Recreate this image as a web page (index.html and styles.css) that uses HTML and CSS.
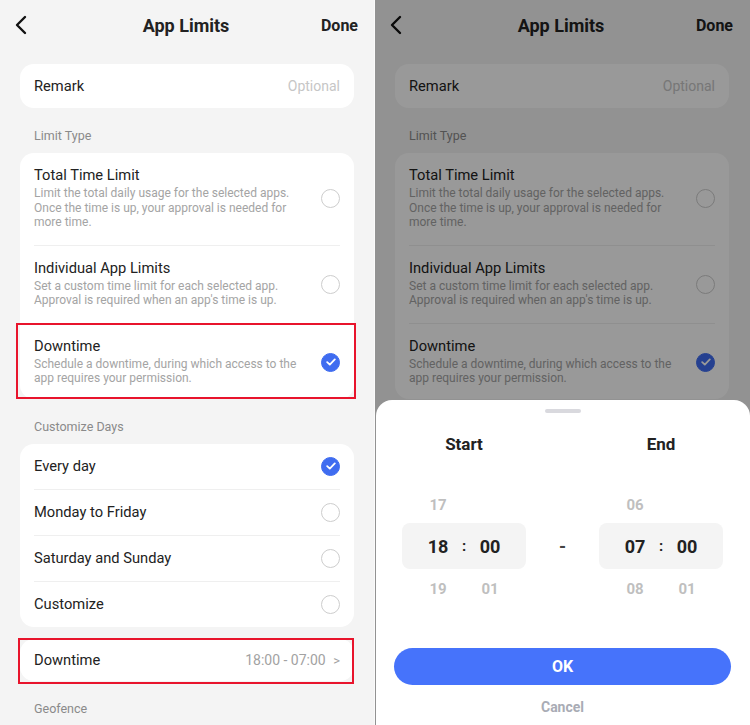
FILE: index.html
```html
<!DOCTYPE html>
<html>
<head>
    <title>App Limits</title>
    <meta charset="UTF-8">
    <link rel="stylesheet" href="styles.css">
</head>
<body>
<div class="screens">

    <!-- settings page -->
    <div class="phone">
        <div class="nav">
            <svg class="back" width="14" height="20" viewBox="0 0 14 20"><path d="M11 2 L3 10 L11 18" fill="none" stroke="#111" stroke-width="2.4" stroke-linecap="round" stroke-linejoin="round"/></svg>
            <div class="nav-title">App Limits</div>
            <div class="nav-done">Done</div>
        </div>

        <div class="card row-card">
            <span class="label">Remark</span>
            <span class="hint">Optional</span>
        </div>

        <div class="section">Limit Type</div>
        <div class="card">
            <div class="item">
                <div class="text">
                    <div class="label">Total Time Limit</div>
                    <div class="desc">Limit the total daily usage for the selected apps. Once the time is up, your approval is needed for more time.</div>
                </div>
                <span class="radio"></span>
            </div>
            <div class="item">
                <div class="text">
                    <div class="label">Individual App Limits</div>
                    <div class="desc">Set a custom time limit for each selected app. Approval is required when an app's time is up.</div>
                </div>
                <span class="radio"></span>
            </div>
            <div class="item marked">
                <div class="text">
                    <div class="label">Downtime</div>
                    <div class="desc">Schedule a downtime, during which access to the app requires your permission.</div>
                </div>
                <span class="radio on"><svg width="10" height="8" viewBox="0 0 10 8"><path d="M1.2 4.2 L3.8 6.6 L8.8 1.4" fill="none" stroke="#fff" stroke-width="1.8" stroke-linecap="round" stroke-linejoin="round"/></svg></span>
            </div>
        </div>

        <div class="section">Customize Days</div>
        <div class="card">
            <div class="day">
                <span class="label">Every day</span>
                <span class="radio on"><svg width="10" height="8" viewBox="0 0 10 8"><path d="M1.2 4.2 L3.8 6.6 L8.8 1.4" fill="none" stroke="#fff" stroke-width="1.8" stroke-linecap="round" stroke-linejoin="round"/></svg></span>
            </div>
            <div class="day">
                <span class="label">Monday to Friday</span>
                <span class="radio"></span>
            </div>
            <div class="day">
                <span class="label">Saturday and Sunday</span>
                <span class="radio"></span>
            </div>
            <div class="day">
                <span class="label">Customize</span>
                <span class="radio"></span>
            </div>
        </div>

        <div class="card row-card downtime boxed">
            <span class="label">Downtime</span>
            <span class="value">18:00 - 07:00 <span class="arrow">&gt;</span></span>
        </div>

        <div class="section">Geofence</div>
    </div>

    <div class="split"></div>

    <!-- same page with the time sheet open -->
    <div class="phone">
        <div class="nav">
            <svg class="back" width="14" height="20" viewBox="0 0 14 20"><path d="M11 2 L3 10 L11 18" fill="none" stroke="#111" stroke-width="2.4" stroke-linecap="round" stroke-linejoin="round"/></svg>
            <div class="nav-title">App Limits</div>
            <div class="nav-done">Done</div>
        </div>

        <div class="card row-card">
            <span class="label">Remark</span>
            <span class="hint">Optional</span>
        </div>

        <div class="section">Limit Type</div>
        <div class="card">
            <div class="item">
                <div class="text">
                    <div class="label">Total Time Limit</div>
                    <div class="desc">Limit the total daily usage for the selected apps. Once the time is up, your approval is needed for more time.</div>
                </div>
                <span class="radio"></span>
            </div>
            <div class="item">
                <div class="text">
                    <div class="label">Individual App Limits</div>
                    <div class="desc">Set a custom time limit for each selected app. Approval is required when an app's time is up.</div>
                </div>
                <span class="radio"></span>
            </div>
            <div class="item">
                <div class="text">
                    <div class="label">Downtime</div>
                    <div class="desc">Schedule a downtime, during which access to the app requires your permission.</div>
                </div>
                <span class="radio on"><svg width="10" height="8" viewBox="0 0 10 8"><path d="M1.2 4.2 L3.8 6.6 L8.8 1.4" fill="none" stroke="#fff" stroke-width="1.8" stroke-linecap="round" stroke-linejoin="round"/></svg></span>
            </div>
        </div>

        <div class="section">Customize Days</div>
        <div class="card">
            <div class="day">
                <span class="label">Every day</span>
                <span class="radio on"></span>
            </div>
        </div>

        <div class="mask"></div>

        <div class="sheet">
            <div class="handle"></div>
            <div class="sheet-head">
                <div>Start</div>
                <div></div>
                <div>End</div>
            </div>
            <div class="picker">
                <div class="wheel">
                    <div class="wheel-row dim"><span class="num">17</span><span class="colon"></span><span class="num"></span></div>
                    <div class="wheel-row cur"><span class="num">18</span><span class="colon">:</span><span class="num">00</span></div>
                    <div class="wheel-row dim"><span class="num">19</span><span class="colon"></span><span class="num">01</span></div>
                </div>
                <div class="dash">-</div>
                <div class="wheel">
                    <div class="wheel-row dim"><span class="num">06</span><span class="colon"></span><span class="num"></span></div>
                    <div class="wheel-row cur"><span class="num">07</span><span class="colon">:</span><span class="num">00</span></div>
                    <div class="wheel-row dim"><span class="num">08</span><span class="colon"></span><span class="num">01</span></div>
                </div>
            </div>
            <button class="ok">OK</button>
            <div class="cancel">Cancel</div>
        </div>
    </div>

</div>
</body>
</html>
```

FILE: styles.css
```css
body { margin: 0; background: #fff; font-family: Roboto, "Noto Sans", Arial, sans-serif; color: #222; overflow: hidden; }
.screens { display: flex; width: 750px; height: 725px; }
.phone { position: relative; width: 374px; height: 725px; background: #f4f4f4; overflow: hidden; padding: 0 20px; box-sizing: border-box; }
.split { width: 1px; background: #fafafa; }
.phone + .split + .phone { width: 375px; padding-right: 21px; }

.nav { display: flex; align-items: center; justify-content: space-between; height: 50px; position: relative; margin: 0 -4px 14px -6px; }
.back { display: block; }
.nav-title { position: absolute; left: 0; right: 0; text-align: center; font-size: 18px; font-weight: 700; color: #222; }
.nav-done { font-size: 16px; font-weight: 700; color: #222; position: relative; }

.card { background: #fff; border-radius: 14px; padding: 0 14px; }
.row-card { display: flex; justify-content: space-between; align-items: center; height: 44px; }
.label { font-size: 14.7px; color: #222; }
.hint { font-size: 14px; color: #c6c6c6; }
.section { font-size: 12.5px; line-height: 15px; color: #8a8a8a; padding: 20px 14px 10px; }

.item { display: flex; align-items: center; gap: 14px; padding: 13px 0 15px; border-top: 1px solid #efefef; }
.item:first-child { border-top: none; }
.item:last-child { padding-bottom: 13px; }
.text { flex: 1; }
.desc { font-size: 12px; line-height: 14.5px; color: #a4a4a4; margin-top: 2px; }
.item .label { display: block; line-height: 18px; }

.radio { width: 17px; height: 17px; border: 1.5px solid #cdcdcd; border-radius: 50%; flex: none; display: flex; align-items: center; justify-content: center; margin-top: 2px; }
.radio.on { background: #3f6cf0; border-color: #3f6cf0; }

.day { display: flex; justify-content: space-between; align-items: center; height: 45px; border-top: 1px solid #efefef; }
.day:first-child { border-top: none; }
.day .radio { margin-top: 0; }

.downtime { margin-top: 12px; height: 42px; }
.value { font-size: 14px; color: #a2a2a2; }
.arrow { margin-left: 4px; font-size: 13px; }

/* red highlight frames */
.marked, .boxed { position: relative; }
.marked::after { content: ""; position: absolute; top: -1px; bottom: 0; left: -18px; right: -16px; border: 2px solid #e8142c; }
.boxed::after { content: ""; position: absolute; top: -1px; bottom: -3px; left: -2px; right: 0; border: 2px solid #e8142c; }

/* time sheet */
.mask { position: absolute; inset: 0; background: rgba(0, 0, 0, 0.4); }
.sheet { position: absolute; left: 1px; right: 0; bottom: 0; height: 325px; background: #fff; border-radius: 16px 16px 0 0; display: flex; flex-direction: column; align-items: center; padding: 0 19px 0 18px; box-sizing: border-box; }
.handle { width: 36px; height: 4px; border-radius: 2px; background: #d9d9de; margin-top: 9px; }
.sheet-head { display: grid; grid-template-columns: 124px 73px 124px; width: 321px; margin-top: 21px; font-size: 17px; font-weight: 700; color: #222; text-align: center; }
.picker { display: grid; grid-template-columns: 124px 73px 124px; width: 321px; margin-top: 31px; }
.wheel { display: grid; grid-template-rows: 38px 46px 38px; }
.wheel-row { display: flex; justify-content: center; align-items: center; }
.wheel-row.cur { background: #f4f4f4; border-radius: 8px; font-size: 18px; font-weight: 700; color: #222; }
.wheel-row.dim { font-size: 15px; font-weight: 700; color: #bfbfbf; padding-top: 2px; }
.num { width: 32px; text-align: center; }
.colon { width: 20px; text-align: center; font-size: 15px; }
.dash { display: flex; align-items: center; justify-content: center; font-size: 18px; font-weight: 700; color: #444; }
.ok { width: 337px; height: 37px; margin-top: 41px; border: none; border-radius: 19px; background: #4673fb; color: #fff; font-family: inherit; font-size: 16px; font-weight: 700; }
.cancel { margin-top: 14px; font-size: 14px; font-weight: 700; color: #a9acb5; }
```
